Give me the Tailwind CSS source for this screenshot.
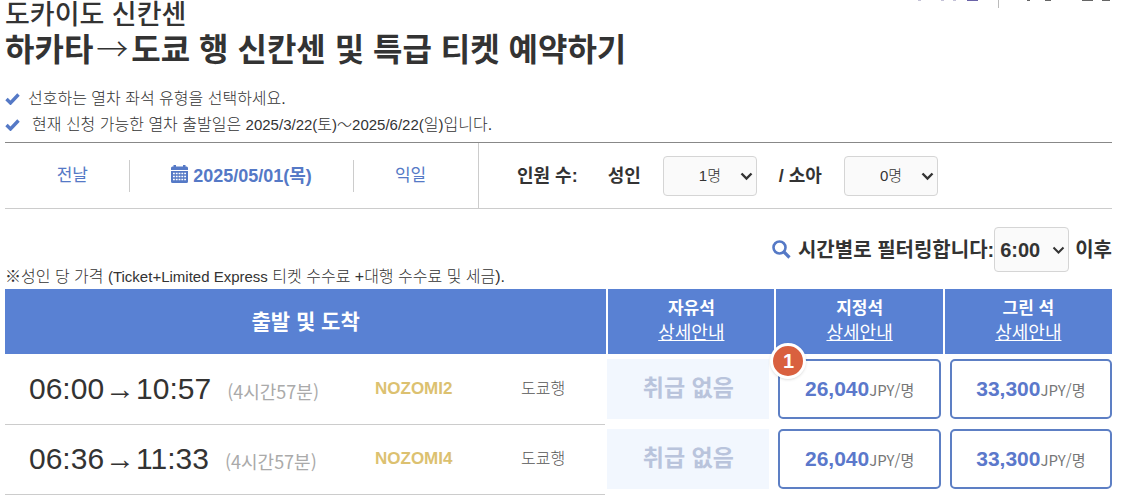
<!DOCTYPE html>
<html lang="ko">
<head>
    <meta charset="UTF-8">
    <meta name="viewport" content="width=device-width, initial-scale=1.0">
    <title>하카타→도쿄 행 신칸센 및 특급 티켓 예약하기</title>
    <script src="https://cdn.jsdelivr.net/npm/@tailwindcss/browser@4"></script>
    <style>
        body {
            font-family: "Liberation Sans", "Noto Sans CJK KR", sans-serif;
        }
    </style>
</head>
<body class="bg-white text-[#333] overflow-hidden">

    <!-- 상단 메뉴의 아래쪽 끝 -->
    <svg class="absolute top-0 right-0" width="210" height="9" viewBox="0 0 210 9" aria-hidden="true">
        <path d="M5 0h3M28 0h3M40 0h3" stroke="#8a86b0" stroke-width="1" />
        <path d="M54 0h11" stroke="#6a63a8" stroke-width="2" />
        <path d="M85.5 0v8" stroke="#bbb" stroke-width="1" />
        <path d="M114 0h3M132 0h6M169 0h11M189 0h8" stroke="#666" stroke-width="2" />
    </svg>

    <main class="pl-[5px] pr-[11px]">

        <!-- 제목 -->
        <h1 class="pt-px font-bold">
            <span class="block text-[27px] leading-[29px] font-medium">도카이도 신칸센</span>
            <span class="block text-[32px] leading-10">하카타<span class="mx-[3px] font-['Noto_Sans_CJK_KR'] leading-none font-light">→</span>도쿄 행 신칸센 및 특급 티켓 예약하기</span>
        </h1>

        <!-- 안내 -->
        <ul class="mt-4 text-base leading-[26px] font-light">
            <li class="flex items-center gap-2">
                <svg class="shrink-0" width="15" height="12" viewBox="0 0 15 12"><path d="M1.5 6l4 4L13.5 1.5" fill="none" stroke="#5579c6" stroke-width="3.4" /></svg>
                <span>선호하는 열차 좌석 유형을 선택하세요.</span>
            </li>
            <li class="flex items-center gap-3">
                <svg class="shrink-0" width="15" height="12" viewBox="0 0 15 12"><path d="M1.5 6l4 4L13.5 1.5" fill="none" stroke="#5579c6" stroke-width="3.4" /></svg>
                <span>현재 신청 가능한 열차 출발일은 <span class="text-[15px]">2025/3/22(</span>토<span class="text-[15px]">)～2025/6/22(</span>일<span class="text-[15px]">)</span>입니다.</span>
            </li>
        </ul>

        <!-- 날짜 및 인원 -->
        <div class="mt-1 flex h-[67px] border-t border-t-[#888] border-b border-b-[#ccc]">
            <div class="w-[474px] shrink-0 px-[11px] border-r border-[#ccc] grid grid-cols-[1fr_2fr_1fr] items-center text-[#5579c6]">
                <button type="button" class="h-8 text-[17px]">전날</button>
                <button type="button" class="h-8 border-x border-[#ccc] text-lg font-bold flex items-center justify-center gap-[5px]">
                    <svg class="mb-1" width="17" height="18" viewBox="0 0 17 18">
                        <path d="M0 5V3q0-1.5 1.5-1.5H2.5V0h2.5v1.5h7V0h2.5v1.5h1Q17 1.5 17 3v2zM0 6h17v10.5q0 1.5-1.5 1.5h-14Q0 18 0 16.5z" fill="#5579c6" />
                        <path d="M2 8.5h13M2 11.5h13M2 14.5h13" stroke="#fff" stroke-width="1.3" stroke-dasharray="1.8 1" />
                    </svg>
                    <span>2025/05/01(목)</span>
                </button>
                <button type="button" class="h-8 text-[17px]">익일</button>
            </div>
            <div class="flex items-center pl-[38px] text-lg font-bold">
                <span class="mr-[30px]">인원 수:</span>
                <label for="adult" class="mr-[22px]">성인</label>
                <div class="relative">
                    <select id="adult" class="block appearance-none w-[94px] h-10 pl-[35px] text-[15px] font-light bg-[#fafafa] border border-[#d5d5d5] rounded">
                        <option>1명</option>
                        <option>2명</option>
                    </select>
                    <svg class="absolute right-1 top-4 pointer-events-none" width="13" height="9" viewBox="0 0 13 9"><path d="M1.5 1.5l5 5 5-5" fill="none" stroke="#333" stroke-width="2.4" /></svg>
                </div>
                <label for="child" class="mx-[22px]">/ 소아</label>
                <div class="relative">
                    <select id="child" class="block appearance-none w-[94px] h-10 pl-[35px] text-[15px] font-light bg-[#fafafa] border border-[#d5d5d5] rounded">
                        <option>0명</option>
                        <option>1명</option>
                    </select>
                    <svg class="absolute right-1 top-4 pointer-events-none" width="13" height="9" viewBox="0 0 13 9"><path d="M1.5 1.5l5 5 5-5" fill="none" stroke="#333" stroke-width="2.4" /></svg>
                </div>
            </div>
        </div>

        <!-- 시간 필터 -->
        <div class="mt-[18px] flex items-center justify-end text-xl font-bold">
            <svg class="mr-[7px]" width="19" height="19" viewBox="0 0 19 19"><circle cx="7.5" cy="7.5" r="6" fill="none" stroke="#5579c6" stroke-width="2.6" /><path d="M12 12l5.5 5.5" stroke="#5579c6" stroke-width="3.2" /></svg>
            <label for="time">시간별로 필터링합니다:</label>
            <div class="relative mr-[6px]">
                <select id="time" class="block appearance-none w-[75px] h-[45px] pl-[5px] bg-[#fafafa] border border-[#d5d5d5] rounded">
                    <option>6:00</option>
                    <option>7:00</option>
                </select>
                <svg class="absolute right-1 top-[19px] pointer-events-none" width="13" height="9" viewBox="0 0 13 9"><path d="M1.5 1.5l5 5 5-5" fill="none" stroke="#333" stroke-width="2" /></svg>
            </div>
            <span>이후</span>
        </div>
        <p class="-mt-2 text-base leading-[25px] font-light">※성인 당 가격 <span class="text-[15px]">(Ticket+Limited Express</span> 티켓 수수료 +대행 수수료 및 세금).</p>

        <!-- 열차 목록 -->
        <table class="w-full table-fixed border-collapse">
            <thead>
                <tr class="h-[65px] bg-[#5981d3] text-white border-b border-white">
                    <th class="w-[54.4%] text-[21px]">출발 및 도착</th>
                    <th class="border-l-2 border-white text-[17px] leading-[25px]">자유석<br><a href="#" class="text-lg leading-[25px] font-normal underline">상세안내</a></th>
                    <th class="border-l-2 border-white text-[17px] leading-[25px]">지정석<br><a href="#" class="text-lg leading-[25px] font-normal underline">상세안내</a></th>
                    <th class="border-l-2 border-white text-[17px] leading-[25px]">그린 석<br><a href="#" class="text-lg leading-[25px] font-normal underline">상세안내</a></th>
                </tr>
            </thead>
            <tbody>
                <tr>
                    <td class="pr-[2px]">
                        <div class="flex items-center h-[70px] pl-6 border-b border-[#ccc]">
                            <div class="w-[346px] flex items-baseline gap-4">
                                <span class="text-3xl">06:00<span class="mx-px">→</span>10:57</span>
                                <span class="font-['Noto_Sans_CJK_KR'] text-lg leading-6 text-[#aaa]">(4시간57분)</span>
                            </div>
                            <span class="w-[146px] text-[17px] font-bold text-[#dcc170]">NOZOMI2</span>
                            <span class="text-base font-light text-[#555]">도쿄행</span>
                        </div>
                    </td>
                    <td class="pt-1 pb-[6px] pr-[6px]">
                        <div class="flex items-center justify-center h-[60px] bg-[#f2f7fe] text-[23px] font-bold text-[#b9c4dc]">취급 없음</div>
                    </td>
                    <td class="relative pt-1 pb-[6px] px-[3px]">
                        <button type="button" class="block w-full h-[60px] border-2 border-[#5d7fc4] rounded-[5px] text-[#777]"><b class="text-[21px] text-[#5b78cb]">26,040</b><span class="font-['Noto_Sans_CJK_KR'] text-[15px] leading-5">JPY/명</span></button>
                        <span class="absolute -top-3 -left-[5px] size-9 flex items-center justify-center rounded-full bg-[#d9603f] border-3 border-white shadow text-xl font-bold text-white">1</span>
                    </td>
                    <td class="pt-1 pb-[6px] pl-[6px]">
                        <button type="button" class="block w-full h-[60px] border-2 border-[#5d7fc4] rounded-[5px] text-[#777]"><b class="text-[21px] text-[#5b78cb]">33,300</b><span class="font-['Noto_Sans_CJK_KR'] text-[15px] leading-5">JPY/명</span></button>
                    </td>
                </tr>
                <tr>
                    <td class="pr-[2px]">
                        <div class="flex items-center h-[70px] pl-6 border-b border-[#ccc]">
                            <div class="w-[346px] flex items-baseline gap-4">
                                <span class="text-3xl">06:36<span class="mx-px">→</span>11:33</span>
                                <span class="font-['Noto_Sans_CJK_KR'] text-lg leading-6 text-[#aaa]">(4시간57분)</span>
                            </div>
                            <span class="w-[146px] text-[17px] font-bold text-[#dcc170]">NOZOMI4</span>
                            <span class="text-base font-light text-[#555]">도쿄행</span>
                        </div>
                    </td>
                    <td class="pt-1 pb-[6px] pr-[6px]">
                        <div class="flex items-center justify-center h-[60px] bg-[#f2f7fe] text-[23px] font-bold text-[#b9c4dc]">취급 없음</div>
                    </td>
                    <td class="pt-1 pb-[6px] px-[3px]">
                        <button type="button" class="block w-full h-[60px] border-2 border-[#5d7fc4] rounded-[5px] text-[#777]"><b class="text-[21px] text-[#5b78cb]">26,040</b><span class="font-['Noto_Sans_CJK_KR'] text-[15px] leading-5">JPY/명</span></button>
                    </td>
                    <td class="pt-1 pb-[6px] pl-[6px]">
                        <button type="button" class="block w-full h-[60px] border-2 border-[#5d7fc4] rounded-[5px] text-[#777]"><b class="text-[21px] text-[#5b78cb]">33,300</b><span class="font-['Noto_Sans_CJK_KR'] text-[15px] leading-5">JPY/명</span></button>
                    </td>
                </tr>
            </tbody>
        </table>
    </main>

</body>
</html>
